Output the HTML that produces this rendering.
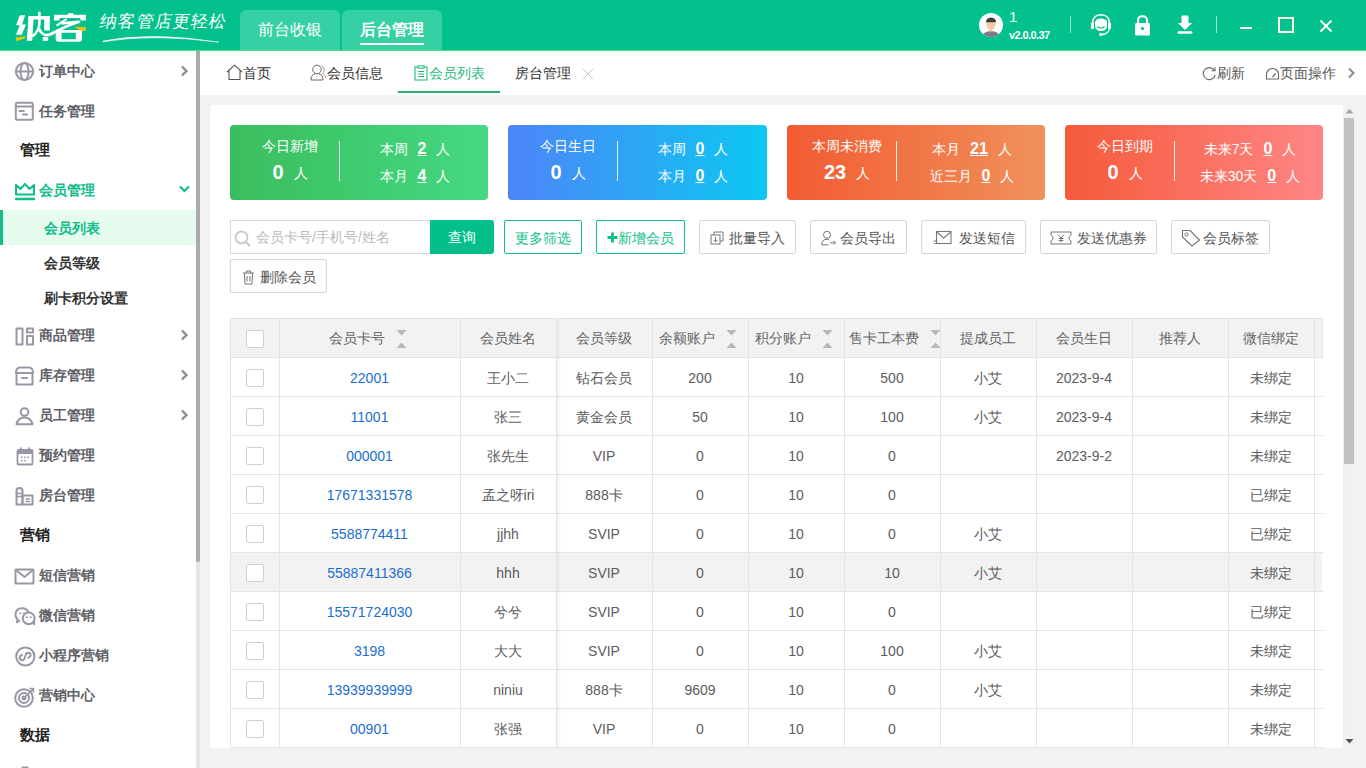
<!DOCTYPE html>
<html><head><meta charset="utf-8"><style>
*{margin:0;padding:0;box-sizing:border-box}
html,body{width:1366px;height:768px;overflow:hidden;background:#f2f2f2;font-family:"Liberation Sans",sans-serif;position:relative}
.a{position:absolute}
.nw{white-space:nowrap}
#hdr{position:absolute;left:0;top:0;width:1366px;height:51px;background:#03c18c;border-bottom:1px solid #52dc7c}
.htab{position:absolute;top:10px;height:40px;background:#35d0a4;border-radius:6px 6px 0 0;color:#fff;font-size:16px;line-height:40px;text-align:center}
#side{position:absolute;left:0;top:0;width:196px;height:768px;overflow:hidden}
.mt{position:absolute;left:39px;height:20px;line-height:20px;font-size:14px;font-weight:bold;color:#606068;white-space:nowrap}
.sec{position:absolute;left:20px;height:20px;line-height:20px;font-size:15px;font-weight:bold;color:#222;white-space:nowrap}
.st{position:absolute;left:44px;height:20px;line-height:20px;font-size:14px;font-weight:bold;color:#333;white-space:nowrap}
.ic{position:absolute;overflow:visible}
.tt{position:absolute;height:20px;line-height:20px;font-size:14px;color:#333;white-space:nowrap}
.card{position:absolute;top:125px;width:258px;height:75px;border-radius:4px;color:#fff}
.card .t{position:absolute;height:20px;line-height:20px;white-space:nowrap}
.btn{position:absolute;top:220px;height:34px;border:1px solid #d6d6d6;border-radius:2px;background:#fff;color:#555;font-size:14px;line-height:32px;white-space:nowrap}
.btn .tx{position:absolute;top:1px}
.gbtn{border-color:#0cbf8b;color:#0cbf8b}
table{border-collapse:collapse;table-layout:fixed}
</style></head><body>
<div id="hdr">
<svg class="a" style="left:0;top:0" width="95" height="48" viewBox="0 0 95 48">
<g fill="#fff">
<polygon points="19.8,15.3 25.1,15.3 22.2,24.6 26,24.6 21.75,34.8 16,34.8 19.75,25.3 16,25.3"/>
<polygon points="28.6,16 33.7,16 32.2,40.8 26.8,40.8"/>
<rect x="28.6" y="16" width="21.2" height="3.5"/>
<rect x="44.2" y="16" width="5.6" height="14.5"/>
<rect x="42.8" y="37" width="5.4" height="3.8"/>
<rect x="68.1" y="13.2" width="5.2" height="2.3"/>
<polygon points="54,14.8 85.9,14.8 85.9,20.4 80.5,20.4 80.5,18.1 59.5,18.1 59.5,20.4 54,20.4"/>
<path fill-rule="evenodd" d="M55.7,30 L82,30 L82,39 Q82,41.7 79,41.7 L58.5,41.7 Q55.7,41.7 55.7,39 Z M61.6,32.8 L75.8,32.8 L75.8,39.2 L61.6,39.2 Z"/>
</g>
<g fill="none" stroke="#fff">
<path d="M39.4,11.8 L39.4,24 Q39,31 32.5,36.5" stroke-width="2.6"/>
<path d="M61.5,23.4 L79,21.8 Q64,27 55,32 Q49,35.5 45,35 Q40,33 38.8,27.5" stroke-width="2.6" stroke-linejoin="round"/>
<path d="M57.3,25.1 L66,19.4" stroke-width="2.2" stroke-linecap="round"/>
</g>
<g fill="#f9c10b">
<polygon points="15.4,37.8 25.5,36.3 24.5,38.5 16.5,41.2"/>
<polygon points="73.7,26.5 85.9,27.2 85.5,31 80.8,30.8"/>
</g>
</svg>
<div class="a nw" style="left:100px;top:9px;font-size:17px;line-height:26px;color:#fff;letter-spacing:1.2px;transform:skewX(-10deg);font-weight:200">纳客管店更轻松</div>
<svg class="a" style="left:100px;top:33px" width="125" height="12" viewBox="0 0 125 12"><path d="M3,8 Q52,-1.5 119,9.2 Q52,0.3 3,8.8 Z" fill="#fff" stroke="#fff" stroke-width="0.5"/></svg>
<div class="htab" style="left:240px;width:100px">前台收银</div>
<div class="htab" style="left:342px;width:100px;font-weight:bold">后台管理<div class="a" style="left:18px;top:33px;width:64px;height:2px;background:#fff"></div></div>
<svg class="a" style="left:979px;top:13px" width="24" height="24" viewBox="0 0 24 24">
<defs><clipPath id="avc"><circle cx="12" cy="12" r="12"/></clipPath></defs>
<circle cx="12" cy="12" r="12" fill="#fff"/>
<g clip-path="url(#avc)">
<path d="M3,24 Q4,18.5 12,18 Q20,18.5 21,24 Z" fill="#787a88"/>
<rect x="10.5" y="14.5" width="3" height="4" fill="#f3c7a3"/>
<ellipse cx="12" cy="11.5" rx="4.6" ry="5.2" fill="#f5c9a5"/>
<path d="M6.8,11 Q6.5,4.5 12,4.5 Q17.5,4.5 17.2,11 L16.5,9 Q12,9.5 7.5,9 Z" fill="#3d3d3d"/>
</g></svg>
<div class="a nw" style="left:1009px;top:8px;font-size:15px;line-height:17px;color:#fff">1</div>
<div class="a nw" style="left:1009px;top:29px;font-size:11px;line-height:13px;color:#fff;font-weight:bold;letter-spacing:-0.6px">v2.0.0.37</div>
<div class="a" style="left:1070px;top:16px;width:1px;height:17px;background:#9ee6cb"></div>
<div class="a" style="left:1216px;top:16px;width:1px;height:17px;background:#9ee6cb"></div>
<svg class="a" style="left:1090px;top:13px" width="22" height="24" viewBox="0 0 22 24">
<path d="M2.5,11 Q2.5,1.8 11,1.8 Q19.5,1.8 19.5,11" fill="none" stroke="#fff" stroke-width="1.6"/>
<rect x="1" y="9.5" width="3" height="6.5" rx="1" fill="#fff"/>
<rect x="18" y="9.5" width="3" height="6.5" rx="1" fill="#fff"/>
<path d="M5,9 Q6,5.5 11,5.5 Q15,5.5 16.5,8 L17,6 L17,12 Q17,18 11,18 Q5,18 5,12 Z" fill="#fff"/>
<path d="M7.5,13.5 Q11,16.5 14.5,13.5" fill="none" stroke="#03c18c" stroke-width="1.1"/>
<path d="M19.5,15 Q19,21 12,21.5" fill="none" stroke="#fff" stroke-width="1.3"/>
<rect x="9" y="20.3" width="4" height="2.4" rx="1.2" fill="#fff"/>
</svg>
<svg class="a" style="left:1134px;top:15px" width="17" height="21" viewBox="0 0 17 21">
<path d="M4,9 L4,5.5 Q4,1.2 8.5,1.2 Q13,1.2 13,5.5 L13,9" fill="none" stroke="#fff" stroke-width="1.9"/>
<rect x="1" y="8" width="15" height="12.5" rx="1.5" fill="#fff"/>
<circle cx="8.5" cy="13.5" r="1.6" fill="#03c18c"/>
</svg>
<svg class="a" style="left:1176px;top:15px" width="18" height="20" viewBox="0 0 18 20">
<path d="M5.5,1.5 Q5.5,0.5 6.5,0.5 L11.5,0.5 Q12.5,0.5 12.5,1.5 L12.5,8 L16.2,8 L9,15 L1.8,8 L5.5,8 Z" fill="#fff"/>
<rect x="0.5" y="16.2" width="15" height="2.6" rx="1.3" fill="#fff" transform="translate(1,0)"/>
</svg>
<div class="a" style="left:1240px;top:27px;width:12px;height:2px;background:#fff"></div>
<div class="a" style="left:1278px;top:17px;width:16px;height:16px;border:2px solid #fdfde3"></div>
<svg class="a" style="left:1319px;top:19px" width="14" height="14" viewBox="0 0 14 14"><path d="M1.5,1.5 L12.5,12.5 M12.5,1.5 L1.5,12.5" stroke="#fff" stroke-width="1.9"/></svg>
</div>
<div id="side" style="background:#fff;top:51px;height:717px"></div>
<svg class="ic" style="left:14px;top:61px" width="21" height="21" viewBox="0 0 21 21" fill="none" stroke="#9797a5" stroke-width="2" stroke-linecap="round" stroke-linejoin="round"><circle cx="10.5" cy="10.5" r="8.6"/><ellipse cx="10.5" cy="10.5" rx="4" ry="8.6"/><path d="M2,10.5 L19,10.5"/></svg>
<div class="mt" style="top:61px">订单中心</div>
<svg class="ic" style="left:179px;top:65px" width="11" height="12" viewBox="0 0 11 12"><path d="M3,1.5 L7.5,6 L3,10.5" fill="none" stroke="#8a8a96" stroke-width="2.3"/></svg>
<svg class="ic" style="left:14px;top:101px" width="21" height="21" viewBox="0 0 21 21" fill="none" stroke="#9797a5" stroke-width="2" stroke-linecap="round" stroke-linejoin="round"><rect x="1.8" y="1.8" width="17" height="17" rx="1.5"/><path d="M2,5.5 L19,5.5"/><path d="M5.5,10 L10,10 M9,13.5 L13,13.5" stroke-width="2"/></svg>
<div class="mt" style="top:101px">任务管理</div>
<div class="sec" style="top:140px">管理</div>
<svg class="ic" style="left:14px;top:182px" width="22" height="20" viewBox="0 0 22 20" fill="none" stroke="#10bc88" stroke-width="2" stroke-linecap="round" stroke-linejoin="round"><path d="M2,12.5 L2,3 L6.5,7 L11,1.8 L15.5,7 L20,3 L20,12.5 Z"/><path d="M2,17 L20,17" stroke-width="2.4"/></svg>
<div class="mt" style="top:180px;color:#10bc88">会员管理</div>
<svg class="ic" style="left:178px;top:184px" width="13" height="10" viewBox="0 0 13 10"><path d="M2,2.5 L6.5,7 L11,2.5" fill="none" stroke="#10bc88" stroke-width="2.2"/></svg>
<div class="a" style="left:0;top:210px;width:196px;height:35px;background:#e5fbee"></div>
<div class="a" style="left:0;top:210px;width:3px;height:35px;background:#10bc88"></div>
<div class="st" style="top:218px;color:#10bc88">会员列表</div>
<div class="st" style="top:253px">会员等级</div>
<div class="st" style="top:288px">刷卡积分设置</div>
<svg class="ic" style="left:14px;top:326px" width="21" height="21" viewBox="0 0 21 21" fill="none" stroke="#9797a5" stroke-width="2" stroke-linecap="round" stroke-linejoin="round"><rect x="2.5" y="2.5" width="6" height="16" /><rect x="13" y="2.5" width="6" height="4"/><rect x="13" y="10" width="6" height="8.5"/></svg>
<div class="mt" style="top:325px">商品管理</div>
<svg class="ic" style="left:179px;top:329px" width="11" height="12" viewBox="0 0 11 12"><path d="M3,1.5 L7.5,6 L3,10.5" fill="none" stroke="#8a8a96" stroke-width="2.3"/></svg>
<svg class="ic" style="left:14px;top:366px" width="21" height="21" viewBox="0 0 21 21" fill="none" stroke="#9797a5" stroke-width="2" stroke-linecap="round" stroke-linejoin="round"><path d="M2,7 Q2,1.5 6,1.5 L15,1.5 Q19,1.5 19,7 Z"/><path d="M2.5,7 L2.5,18.5 L18.5,18.5 L18.5,7"/><path d="M8,12 L13,12" stroke-width="2"/></svg>
<div class="mt" style="top:365px">库存管理</div>
<svg class="ic" style="left:179px;top:369px" width="11" height="12" viewBox="0 0 11 12"><path d="M3,1.5 L7.5,6 L3,10.5" fill="none" stroke="#8a8a96" stroke-width="2.3"/></svg>
<svg class="ic" style="left:14px;top:406px" width="21" height="21" viewBox="0 0 21 21" fill="none" stroke="#9797a5" stroke-width="2" stroke-linecap="round" stroke-linejoin="round"><circle cx="10.5" cy="6" r="3.8"/><path d="M2.5,18.3 Q4,11.5 10.5,11.5 Q17,11.5 18.5,18.3 Z"/></svg>
<div class="mt" style="top:405px">员工管理</div>
<svg class="ic" style="left:179px;top:409px" width="11" height="12" viewBox="0 0 11 12"><path d="M3,1.5 L7.5,6 L3,10.5" fill="none" stroke="#8a8a96" stroke-width="2.3"/></svg>
<svg class="ic" style="left:14px;top:446px" width="21" height="21" viewBox="0 0 21 21"><rect x="3.5" y="4" width="15" height="14.5" rx="1" fill="none" stroke="#9797a5" stroke-width="1.8"/><rect x="3.5" y="4" width="15" height="4" fill="#9797a5"/><rect x="6" y="1.5" width="1.8" height="3" fill="#9797a5"/><rect x="14.2" y="1.5" width="1.8" height="3" fill="#9797a5"/><g fill="#9797a5"><rect x="7" y="10.5" width="1.6" height="1.6"/><rect x="10.2" y="10.5" width="1.6" height="1.6"/><rect x="13.4" y="10.5" width="1.6" height="1.6"/><rect x="7" y="13.8" width="1.6" height="1.6"/><rect x="10.2" y="13.8" width="1.6" height="1.6"/></g></svg>
<div class="mt" style="top:445px">预约管理</div>
<svg class="ic" style="left:14px;top:486px" width="21" height="21" viewBox="0 0 21 21" fill="none" stroke="#9797a5" stroke-width="2" stroke-linecap="round" stroke-linejoin="round"><path d="M2.5,18.5 L2.5,5 Q2.5,2 5.5,2 Q8.5,2 8.5,5 L8.5,18.5 Z"/><path d="M3,7.5 L8,7.5 M3,10.5 L8,10.5" stroke-width="1.4"/><rect x="8.5" y="9.5" width="10" height="9"/><path d="M12,13 L15.5,13 M12,15.5 L15.5,15.5" stroke-width="1.4"/></svg>
<div class="mt" style="top:485px">房台管理</div>
<div class="sec" style="top:525px">营销</div>
<svg class="ic" style="left:14px;top:567px" width="21" height="18" viewBox="0 0 21 18" fill="none" stroke="#9797a5" stroke-width="2" stroke-linecap="round" stroke-linejoin="round"><rect x="1.5" y="2.5" width="18" height="14" rx="0.5"/><path d="M2,3 L10.5,10 L19,3"/></svg>
<div class="mt" style="top:565px">短信营销</div>
<svg class="ic" style="left:14px;top:606px" width="22" height="21" viewBox="0 0 22 21" fill="none" stroke="#9797a5" stroke-width="2" stroke-linecap="round" stroke-linejoin="round"><path d="M5.2,14.8 L2.8,16.2 L3.6,13.2 Q1.5,11.5 1.5,8.8 Q1.5,2.3 8,2.3 Q12.5,2.3 14.2,5.8"/><circle cx="14.7" cy="12.3" r="5.9" fill="#fff"/><path d="M18.5,16.8 L20.3,18.2 L20,15.2" /><path d="M5.8,7.2 L6.8,7.2 M9.6,7.2 L10.6,7.2 M12.2,11.2 L13.2,11.2 M16.2,11.2 L17.2,11.2" stroke-width="1.5"/></svg>
<div class="mt" style="top:605px">微信营销</div>
<svg class="ic" style="left:14px;top:646px" width="22" height="21" viewBox="0 0 22 21" fill="none" stroke="#9797a5" stroke-width="2" stroke-linecap="round" stroke-linejoin="round"><circle cx="11.3" cy="10.5" r="9.1"/><path d="M8,9.3 Q5.6,9.6 5.6,11.9 Q5.8,14.2 8.2,14.2 Q10.5,14 10.8,11.5 L11.6,9.2 Q12,6.8 14.3,6.8 Q16.6,7 16.6,9.2 Q16.4,11.4 14.2,11.6" stroke-width="1.9"/></svg>
<div class="mt" style="top:645px">小程序营销</div>
<svg class="ic" style="left:14px;top:686px" width="22" height="22" viewBox="0 0 22 22" fill="none" stroke="#9797a5" stroke-width="2" stroke-linecap="round" stroke-linejoin="round"><circle cx="10" cy="12" r="8.8"/><circle cx="10" cy="12" r="5"/><circle cx="10" cy="12" r="1.5"/><path d="M10,12 L19,3 M16,2.5 L19.5,2.5 L19.5,6" stroke-width="1.6"/></svg>
<div class="mt" style="top:685px">营销中心</div>
<div class="sec" style="top:725px">数据</div>
<svg class="ic" style="left:14px;top:765px" width="21" height="10" viewBox="0 0 21 10" fill="none" stroke="#9797a5" stroke-width="2" stroke-linecap="round" stroke-linejoin="round"><path d="M8.5,2.5 L13.5,2.5"/></svg>
<div class="a" style="left:196px;top:51px;width:4px;height:717px;background:#e6e6e6"></div>
<div class="a" style="left:196px;top:51px;width:4px;height:511px;background:#ababab;border-radius:0 0 2px 2px"></div>
<div class="a" style="left:200px;top:51px;width:1166px;height:44px;background:#fff"></div>
<svg class="ic" style="left:226px;top:64px" width="17" height="17" viewBox="0 0 17 17"><path d="M1,8 L8.5,1.2 L16,8 M3,6.5 L3,15.5 L14,15.5 L14,6.5" fill="none" stroke="#555" stroke-width="1.1"/></svg>
<div class="tt" style="left:243px;top:63px">首页</div>
<svg class="ic" style="left:310px;top:64px" width="17" height="17" viewBox="0 0 17 17"><circle cx="7" cy="5.5" r="4.3" fill="none" stroke="#555" stroke-width="0.9"/><path d="M1,16 Q1,10.5 5,10 M9,10 Q13,10.5 13,16 L1,16" fill="none" stroke="#555" stroke-width="0.9"/><path d="M11.5,1.8 Q14.5,3 14.3,6.5 Q14,8.5 12.5,9.5 Q15.5,10.5 16,14" fill="none" stroke="#888" stroke-width="0.8"/></svg>
<div class="tt" style="left:327px;top:63px">会员信息</div>
<svg class="ic" style="left:413px;top:65px" width="16" height="16" viewBox="0 0 16 16"><rect x="2" y="2" width="12" height="13" fill="none" stroke="#1fba7a" stroke-width="1.1"/><rect x="5" y="0.8" width="6" height="2.4" fill="#fff" stroke="#1fba7a" stroke-width="1"/><path d="M5,6.5 L11,6.5 M5,9 L11,9 M5,11.5 L11,11.5" stroke="#1fba7a" stroke-width="1"/></svg>
<div class="tt" style="left:429px;top:63px;color:#1fba7a">会员列表</div>
<div class="a" style="left:398px;top:91px;width:102px;height:2px;background:#22b46e"></div>
<div class="tt" style="left:515px;top:63px">房台管理</div>
<svg class="ic" style="left:582px;top:68px" width="12" height="12" viewBox="0 0 12 12"><path d="M1,1 L11,11 M11,1 L1,11" stroke="#c8c8c8" stroke-width="1"/></svg>
<svg class="ic" style="left:1202px;top:66px" width="15" height="15" viewBox="0 0 15 15"><path d="M12.5,4.5 A6,6 0 1 0 13.2,9" fill="none" stroke="#666" stroke-width="1.1"/><path d="M9.5,4.8 L13,4.8 L13,1.2" fill="none" stroke="#666" stroke-width="1.1"/></svg>
<div class="tt" style="left:1217px;top:63px;color:#555">刷新</div>
<svg class="ic" style="left:1265px;top:66px" width="15" height="15" viewBox="0 0 15 15"><path d="M1.5,13 L1.5,8.5 A6,6 0 0 1 13.5,8.5 L13.5,13 Z" fill="none" stroke="#666" stroke-width="1.1"/><path d="M7.5,11 L10.5,7.5" stroke="#666" stroke-width="1.2"/></svg>
<div class="tt" style="left:1280px;top:63px;color:#555">页面操作</div>
<svg class="ic" style="left:1346px;top:67px" width="11" height="12" viewBox="0 0 11 12"><path d="M3,1.5 L7.5,6 L3,10.5" fill="none" stroke="#8a8a96" stroke-width="2"/></svg>
<div class="a" style="left:210px;top:105px;width:1146px;height:643px;background:#fff;border-radius:3px 0 0 3px"></div>
<div class="card" style="left:230px;width:258px;background:linear-gradient(90deg,#3bbd5e,#44d982)">
<div class="t" style="left:0;width:120px;text-align:center;top:11px;font-size:14px">今日新增</div>
<div class="t" style="left:0;width:120px;text-align:center;top:37px;font-size:14px"><b style="font-size:20px;vertical-align:-1px">0</b><span style="margin-left:10px">人</span></div>
<div class="a" style="left:109px;top:16px;width:1px;height:40px;background:rgba(255,255,255,0.9)"></div>
<div class="t" style="left:110px;width:150px;text-align:center;top:14px;font-size:14px">本周<u style="font-weight:bold;font-size:16px;margin:0 10px">2</u>人</div>
<div class="t" style="left:110px;width:150px;text-align:center;top:41px;font-size:14px">本月<u style="font-weight:bold;font-size:16px;margin:0 10px">4</u>人</div>
</div>
<div class="card" style="left:508px;width:259px;background:linear-gradient(90deg,#4d85f8,#0cc8f1)">
<div class="t" style="left:0;width:120px;text-align:center;top:11px;font-size:14px">今日生日</div>
<div class="t" style="left:0;width:120px;text-align:center;top:37px;font-size:14px"><b style="font-size:20px;vertical-align:-1px">0</b><span style="margin-left:10px">人</span></div>
<div class="a" style="left:109px;top:16px;width:1px;height:40px;background:rgba(255,255,255,0.9)"></div>
<div class="t" style="left:110px;width:150px;text-align:center;top:14px;font-size:14px">本周<u style="font-weight:bold;font-size:16px;margin:0 10px">0</u>人</div>
<div class="t" style="left:110px;width:150px;text-align:center;top:41px;font-size:14px">本月<u style="font-weight:bold;font-size:16px;margin:0 10px">0</u>人</div>
</div>
<div class="card" style="left:787px;width:258px;background:linear-gradient(90deg,#f25b33,#f0915b)">
<div class="t" style="left:0;width:120px;text-align:center;top:11px;font-size:14px">本周未消费</div>
<div class="t" style="left:0;width:120px;text-align:center;top:37px;font-size:14px"><b style="font-size:20px;vertical-align:-1px">23</b><span style="margin-left:10px">人</span></div>
<div class="a" style="left:109px;top:16px;width:1px;height:40px;background:rgba(255,255,255,0.9)"></div>
<div class="t" style="left:110px;width:150px;text-align:center;top:14px;font-size:14px">本月<u style="font-weight:bold;font-size:16px;margin:0 10px">21</u>人</div>
<div class="t" style="left:110px;width:150px;text-align:center;top:41px;font-size:14px">近三月<u style="font-weight:bold;font-size:16px;margin:0 10px">0</u>人</div>
</div>
<div class="card" style="left:1065px;width:258px;background:linear-gradient(90deg,#f55a3a,#ff8686)">
<div class="t" style="left:0;width:120px;text-align:center;top:11px;font-size:14px">今日到期</div>
<div class="t" style="left:0;width:120px;text-align:center;top:37px;font-size:14px"><b style="font-size:20px;vertical-align:-1px">0</b><span style="margin-left:10px">人</span></div>
<div class="a" style="left:109px;top:16px;width:1px;height:40px;background:rgba(255,255,255,0.9)"></div>
<div class="t" style="left:110px;width:150px;text-align:center;top:14px;font-size:14px">未来7天<u style="font-weight:bold;font-size:16px;margin:0 10px">0</u>人</div>
<div class="t" style="left:110px;width:150px;text-align:center;top:41px;font-size:14px">未来30天<u style="font-weight:bold;font-size:16px;margin:0 10px">0</u>人</div>
</div>
<div class="a" style="left:230px;top:220px;width:201px;height:34px;border:1px solid #d9d9d9;border-right:none;background:#fff"></div>
<svg class="ic" style="left:234px;top:230px" width="18" height="18" viewBox="0 0 18 18"><circle cx="7.5" cy="7.5" r="6" fill="none" stroke="#c8c8c8" stroke-width="1.8"/><path d="M12,12 L16,16" stroke="#c8c8c8" stroke-width="2"/></svg>
<div class="tt" style="left:256px;top:227px;color:#bbb;font-size:14px">会员卡号/手机号/姓名</div>
<div class="a" style="left:430px;top:220px;width:64px;height:34px;background:#05bf8b;border-radius:0 3px 3px 0;color:#fff;font-size:14px;line-height:34px;text-align:center">查询</div>
<div class="btn gbtn" style="left:504px;width:78px;top:220px"><span class="tx" style="left:10px">更多筛选</span></div>
<div class="btn gbtn" style="left:596px;width:89px;top:220px"><svg class="ic" style="left:10px;top:11px" width="11" height="11" viewBox="0 0 11 11"><path d="M5.5,0.5 L5.5,10.5 M0.5,5.5 L10.5,5.5" stroke="#0cbf8b" stroke-width="2.8"/></svg><span class="tx" style="left:21px">新增会员</span></div>
<div class="btn " style="left:699px;width:97px;top:220px"><svg class="ic" style="left:10px;top:10px" width="14" height="14" viewBox="0 0 14 14"><rect x="1" y="4" width="9" height="9" fill="none" stroke="#777" stroke-width="1"/><path d="M4,4 L4,1 L13,1 L13,10 L10,10" fill="none" stroke="#777" stroke-width="1"/><path d="M5.5,6 L5.5,11 M3.5,9 L5.5,11 L7.5,9" fill="none" stroke="#777" stroke-width="1"/></svg><span class="tx" style="left:29px">批量导入</span></div>
<div class="btn " style="left:810px;width:97px;top:220px"><svg class="ic" style="left:9px;top:9px" width="17" height="16" viewBox="0 0 17 16"><circle cx="7" cy="4.8" r="3.5" fill="none" stroke="#777" stroke-width="1"/><path d="M9.5,10.2 Q8.5,9.3 7,9.3 Q1.8,9.3 1.8,14.8 L8.5,14.8 M10,12.8 L15.5,12.8 M13.5,10.8 L15.5,12.8 L13.5,14.8" fill="none" stroke="#777" stroke-width="1"/></svg><span class="tx" style="left:29px">会员导出</span></div>
<div class="btn " style="left:921px;width:105px;top:220px"><svg class="ic" style="left:11px;top:9px" width="19" height="16" viewBox="0 0 19 16"><rect x="3.5" y="1.5" width="14.5" height="12" fill="none" stroke="#777" stroke-width="1.1"/><path d="M3.8,2 L10.7,8 L17.7,2" fill="none" stroke="#777" stroke-width="1.1"/><path d="M0.5,11 L3,11 M1.5,13.5 L3,13.5" stroke="#777" stroke-width="1"/></svg><span class="tx" style="left:37px">发送短信</span></div>
<div class="btn " style="left:1040px;width:117px;top:220px"><svg class="ic" style="left:9px;top:10px" width="22" height="14" viewBox="0 0 22 14"><path d="M1,1 L21,1 L21,4 Q19,5 19,7 Q19,9 21,10 L21,13 L1,13 L1,10 Q3,9 3,7 Q3,5 1,4 Z" fill="none" stroke="#777" stroke-width="1"/><path d="M8,3.5 L11,7 L14,3.5 M11,7 L11,11.5 M8.5,7.5 L13.5,7.5 M8.5,9.5 L13.5,9.5" fill="none" stroke="#777" stroke-width="1"/></svg><span class="tx" style="left:36px">发送优惠券</span></div>
<div class="btn " style="left:1171px;width:99px;top:220px"><svg class="ic" style="left:9px;top:8px" width="20" height="18" viewBox="0 0 20 18"><path d="M1.5,1.5 L9,1.5 L18.5,11 L11,17 L1.5,8 Z" fill="none" stroke="#777" stroke-width="1.1" stroke-linejoin="round"/><circle cx="5.5" cy="5.5" r="1.6" fill="none" stroke="#777" stroke-width="1"/></svg><span class="tx" style="left:31px">会员标签</span></div>
<div class="btn " style="left:230px;width:97px;top:259px"><svg class="ic" style="left:11px;top:10px" width="13" height="15" viewBox="0 0 13 15"><path d="M1,3 L12,3 M4.5,3 L4.5,1 L8.5,1 L8.5,3 M2.5,3 L3,14 L10,14 L10.5,3 M5,6 L5,11.5 M8,6 L8,11.5" fill="none" stroke="#777" stroke-width="1"/></svg><span class="tx" style="left:29px">删除会员</span></div>
<div class="a" style="left:230px;top:318px;width:1092px;height:40px;background:#f2f2f2"></div>
<div class="a" style="left:230px;top:552px;width:1092px;height:39px;background:#f2f2f2"></div>
<div class="a" style="left:230px;top:318px;width:1093px;height:1px;background:#e4e4e4"></div>
<div class="a" style="left:230px;top:357px;width:1093px;height:1px;background:#e4e4e4"></div>
<div class="a" style="left:230px;top:396px;width:1093px;height:1px;background:#e4e4e4"></div>
<div class="a" style="left:230px;top:435px;width:1093px;height:1px;background:#e4e4e4"></div>
<div class="a" style="left:230px;top:474px;width:1093px;height:1px;background:#e4e4e4"></div>
<div class="a" style="left:230px;top:513px;width:1093px;height:1px;background:#e4e4e4"></div>
<div class="a" style="left:230px;top:552px;width:1093px;height:1px;background:#e4e4e4"></div>
<div class="a" style="left:230px;top:591px;width:1093px;height:1px;background:#e4e4e4"></div>
<div class="a" style="left:230px;top:630px;width:1093px;height:1px;background:#e4e4e4"></div>
<div class="a" style="left:230px;top:669px;width:1093px;height:1px;background:#e4e4e4"></div>
<div class="a" style="left:230px;top:708px;width:1093px;height:1px;background:#e4e4e4"></div>
<div class="a" style="left:230px;top:747px;width:1093px;height:1px;background:#e4e4e4"></div>
<div class="a" style="left:230px;top:318px;width:1px;height:430px;background:#e4e4e4"></div>
<div class="a" style="left:279px;top:318px;width:1px;height:430px;background:#e4e4e4"></div>
<div class="a" style="left:460px;top:318px;width:1px;height:430px;background:#e4e4e4"></div>
<div class="a" style="left:556px;top:318px;width:1px;height:430px;background:#e4e4e4"></div>
<div class="a" style="left:652px;top:318px;width:1px;height:430px;background:#e4e4e4"></div>
<div class="a" style="left:748px;top:318px;width:1px;height:430px;background:#e4e4e4"></div>
<div class="a" style="left:844px;top:318px;width:1px;height:430px;background:#e4e4e4"></div>
<div class="a" style="left:940px;top:318px;width:1px;height:430px;background:#e4e4e4"></div>
<div class="a" style="left:1036px;top:318px;width:1px;height:430px;background:#e4e4e4"></div>
<div class="a" style="left:1132px;top:318px;width:1px;height:430px;background:#e4e4e4"></div>
<div class="a" style="left:1228px;top:318px;width:1px;height:430px;background:#e4e4e4"></div>
<div class="a" style="left:1314px;top:318px;width:1px;height:430px;background:#e4e4e4"></div>
<div class="a" style="left:1322px;top:318px;width:1px;height:40px;background:#e4e4e4"></div>
<div class="a" style="left:557px;top:319px;width:5px;height:428px;background:linear-gradient(90deg,rgba(0,0,0,0.045),rgba(0,0,0,0))"></div>
<div class="a" style="left:246px;top:330px;width:18px;height:18px;border:1px solid #cfcfcf;border-radius:2px;background:#fff"></div>
<div class="a" style="left:246px;top:369px;width:18px;height:18px;border:1px solid #cfcfcf;border-radius:2px;background:#fff"></div>
<div class="a" style="left:246px;top:408px;width:18px;height:18px;border:1px solid #cfcfcf;border-radius:2px;background:#fff"></div>
<div class="a" style="left:246px;top:447px;width:18px;height:18px;border:1px solid #cfcfcf;border-radius:2px;background:#fff"></div>
<div class="a" style="left:246px;top:486px;width:18px;height:18px;border:1px solid #cfcfcf;border-radius:2px;background:#fff"></div>
<div class="a" style="left:246px;top:525px;width:18px;height:18px;border:1px solid #cfcfcf;border-radius:2px;background:#fff"></div>
<div class="a" style="left:246px;top:564px;width:18px;height:18px;border:1px solid #cfcfcf;border-radius:2px;background:#fff"></div>
<div class="a" style="left:246px;top:603px;width:18px;height:18px;border:1px solid #cfcfcf;border-radius:2px;background:#fff"></div>
<div class="a" style="left:246px;top:642px;width:18px;height:18px;border:1px solid #cfcfcf;border-radius:2px;background:#fff"></div>
<div class="a" style="left:246px;top:681px;width:18px;height:18px;border:1px solid #cfcfcf;border-radius:2px;background:#fff"></div>
<div class="a" style="left:246px;top:720px;width:18px;height:18px;border:1px solid #cfcfcf;border-radius:2px;background:#fff"></div>
<div class="tt" style="left:329px;top:328px;color:#666">会员卡号</div>
<svg class="ic" style="left:396px;top:330px" width="11" height="19" viewBox="0 0 11 19"><path d="M0.5,0 L10.5,0 L5.5,5.5 Z M0.5,18 L10.5,18 L5.5,12.5 Z" fill="#b8b8b8"/></svg>
<div class="tt" style="left:460px;width:96px;top:328px;text-align:center;color:#666">会员姓名</div>
<div class="tt" style="left:556px;width:96px;top:328px;text-align:center;color:#666">会员等级</div>
<div class="tt" style="left:659px;top:328px;color:#666">余额账户</div>
<svg class="ic" style="left:726px;top:330px" width="11" height="19" viewBox="0 0 11 19"><path d="M0.5,0 L10.5,0 L5.5,5.5 Z M0.5,18 L10.5,18 L5.5,12.5 Z" fill="#b8b8b8"/></svg>
<div class="tt" style="left:755px;top:328px;color:#666">积分账户</div>
<svg class="ic" style="left:822px;top:330px" width="11" height="19" viewBox="0 0 11 19"><path d="M0.5,0 L10.5,0 L5.5,5.5 Z M0.5,18 L10.5,18 L5.5,12.5 Z" fill="#b8b8b8"/></svg>
<div class="tt" style="left:849px;top:328px;color:#666">售卡工本费</div>
<svg class="ic" style="left:930px;top:330px" width="11" height="19" viewBox="0 0 11 19"><path d="M0.5,0 L10.5,0 L5.5,5.5 Z M0.5,18 L10.5,18 L5.5,12.5 Z" fill="#b8b8b8"/></svg>
<div class="tt" style="left:940px;width:96px;top:328px;text-align:center;color:#666">提成员工</div>
<div class="tt" style="left:1036px;width:96px;top:328px;text-align:center;color:#666">会员生日</div>
<div class="tt" style="left:1132px;width:96px;top:328px;text-align:center;color:#666">推荐人</div>
<div class="tt" style="left:1228px;width:86px;top:328px;text-align:center;color:#666">微信绑定</div>
<div class="tt" style="left:279px;width:181px;top:368px;text-align:center;color:#1a6ed0">22001</div>
<div class="tt" style="left:460px;width:96px;top:368px;text-align:center;color:#5c5c5c">王小二</div>
<div class="tt" style="left:556px;width:96px;top:368px;text-align:center;color:#5c5c5c">钻石会员</div>
<div class="tt" style="left:652px;width:96px;top:368px;text-align:center;color:#5c5c5c">200</div>
<div class="tt" style="left:748px;width:96px;top:368px;text-align:center;color:#5c5c5c">10</div>
<div class="tt" style="left:844px;width:96px;top:368px;text-align:center;color:#5c5c5c">500</div>
<div class="tt" style="left:940px;width:96px;top:368px;text-align:center;color:#5c5c5c">小艾</div>
<div class="tt" style="left:1036px;width:96px;top:368px;text-align:center;color:#5c5c5c">2023-9-4</div>
<div class="tt" style="left:1228px;width:86px;top:368px;text-align:center;color:#5c5c5c">未绑定</div>
<div class="tt" style="left:279px;width:181px;top:407px;text-align:center;color:#1a6ed0">11001</div>
<div class="tt" style="left:460px;width:96px;top:407px;text-align:center;color:#5c5c5c">张三</div>
<div class="tt" style="left:556px;width:96px;top:407px;text-align:center;color:#5c5c5c">黄金会员</div>
<div class="tt" style="left:652px;width:96px;top:407px;text-align:center;color:#5c5c5c">50</div>
<div class="tt" style="left:748px;width:96px;top:407px;text-align:center;color:#5c5c5c">10</div>
<div class="tt" style="left:844px;width:96px;top:407px;text-align:center;color:#5c5c5c">100</div>
<div class="tt" style="left:940px;width:96px;top:407px;text-align:center;color:#5c5c5c">小艾</div>
<div class="tt" style="left:1036px;width:96px;top:407px;text-align:center;color:#5c5c5c">2023-9-4</div>
<div class="tt" style="left:1228px;width:86px;top:407px;text-align:center;color:#5c5c5c">未绑定</div>
<div class="tt" style="left:279px;width:181px;top:446px;text-align:center;color:#1a6ed0">000001</div>
<div class="tt" style="left:460px;width:96px;top:446px;text-align:center;color:#5c5c5c">张先生</div>
<div class="tt" style="left:556px;width:96px;top:446px;text-align:center;color:#5c5c5c">VIP</div>
<div class="tt" style="left:652px;width:96px;top:446px;text-align:center;color:#5c5c5c">0</div>
<div class="tt" style="left:748px;width:96px;top:446px;text-align:center;color:#5c5c5c">10</div>
<div class="tt" style="left:844px;width:96px;top:446px;text-align:center;color:#5c5c5c">0</div>
<div class="tt" style="left:1036px;width:96px;top:446px;text-align:center;color:#5c5c5c">2023-9-2</div>
<div class="tt" style="left:1228px;width:86px;top:446px;text-align:center;color:#5c5c5c">未绑定</div>
<div class="tt" style="left:279px;width:181px;top:485px;text-align:center;color:#1a6ed0">17671331578</div>
<div class="tt" style="left:460px;width:96px;top:485px;text-align:center;color:#5c5c5c">孟之呀iri</div>
<div class="tt" style="left:556px;width:96px;top:485px;text-align:center;color:#5c5c5c">888卡</div>
<div class="tt" style="left:652px;width:96px;top:485px;text-align:center;color:#5c5c5c">0</div>
<div class="tt" style="left:748px;width:96px;top:485px;text-align:center;color:#5c5c5c">10</div>
<div class="tt" style="left:844px;width:96px;top:485px;text-align:center;color:#5c5c5c">0</div>
<div class="tt" style="left:1228px;width:86px;top:485px;text-align:center;color:#5c5c5c">已绑定</div>
<div class="tt" style="left:279px;width:181px;top:524px;text-align:center;color:#1a6ed0">5588774411</div>
<div class="tt" style="left:460px;width:96px;top:524px;text-align:center;color:#5c5c5c">jjhh</div>
<div class="tt" style="left:556px;width:96px;top:524px;text-align:center;color:#5c5c5c">SVIP</div>
<div class="tt" style="left:652px;width:96px;top:524px;text-align:center;color:#5c5c5c">0</div>
<div class="tt" style="left:748px;width:96px;top:524px;text-align:center;color:#5c5c5c">10</div>
<div class="tt" style="left:844px;width:96px;top:524px;text-align:center;color:#5c5c5c">0</div>
<div class="tt" style="left:940px;width:96px;top:524px;text-align:center;color:#5c5c5c">小艾</div>
<div class="tt" style="left:1228px;width:86px;top:524px;text-align:center;color:#5c5c5c">已绑定</div>
<div class="tt" style="left:279px;width:181px;top:563px;text-align:center;color:#1a6ed0">55887411366</div>
<div class="tt" style="left:460px;width:96px;top:563px;text-align:center;color:#5c5c5c">hhh</div>
<div class="tt" style="left:556px;width:96px;top:563px;text-align:center;color:#5c5c5c">SVIP</div>
<div class="tt" style="left:652px;width:96px;top:563px;text-align:center;color:#5c5c5c">0</div>
<div class="tt" style="left:748px;width:96px;top:563px;text-align:center;color:#5c5c5c">10</div>
<div class="tt" style="left:844px;width:96px;top:563px;text-align:center;color:#5c5c5c">10</div>
<div class="tt" style="left:940px;width:96px;top:563px;text-align:center;color:#5c5c5c">小艾</div>
<div class="tt" style="left:1228px;width:86px;top:563px;text-align:center;color:#5c5c5c">未绑定</div>
<div class="tt" style="left:279px;width:181px;top:602px;text-align:center;color:#1a6ed0">15571724030</div>
<div class="tt" style="left:460px;width:96px;top:602px;text-align:center;color:#5c5c5c">兮兮</div>
<div class="tt" style="left:556px;width:96px;top:602px;text-align:center;color:#5c5c5c">SVIP</div>
<div class="tt" style="left:652px;width:96px;top:602px;text-align:center;color:#5c5c5c">0</div>
<div class="tt" style="left:748px;width:96px;top:602px;text-align:center;color:#5c5c5c">10</div>
<div class="tt" style="left:844px;width:96px;top:602px;text-align:center;color:#5c5c5c">0</div>
<div class="tt" style="left:1228px;width:86px;top:602px;text-align:center;color:#5c5c5c">已绑定</div>
<div class="tt" style="left:279px;width:181px;top:641px;text-align:center;color:#1a6ed0">3198</div>
<div class="tt" style="left:460px;width:96px;top:641px;text-align:center;color:#5c5c5c">大大</div>
<div class="tt" style="left:556px;width:96px;top:641px;text-align:center;color:#5c5c5c">SVIP</div>
<div class="tt" style="left:652px;width:96px;top:641px;text-align:center;color:#5c5c5c">0</div>
<div class="tt" style="left:748px;width:96px;top:641px;text-align:center;color:#5c5c5c">10</div>
<div class="tt" style="left:844px;width:96px;top:641px;text-align:center;color:#5c5c5c">100</div>
<div class="tt" style="left:940px;width:96px;top:641px;text-align:center;color:#5c5c5c">小艾</div>
<div class="tt" style="left:1228px;width:86px;top:641px;text-align:center;color:#5c5c5c">未绑定</div>
<div class="tt" style="left:279px;width:181px;top:680px;text-align:center;color:#1a6ed0">13939939999</div>
<div class="tt" style="left:460px;width:96px;top:680px;text-align:center;color:#5c5c5c">niniu</div>
<div class="tt" style="left:556px;width:96px;top:680px;text-align:center;color:#5c5c5c">888卡</div>
<div class="tt" style="left:652px;width:96px;top:680px;text-align:center;color:#5c5c5c">9609</div>
<div class="tt" style="left:748px;width:96px;top:680px;text-align:center;color:#5c5c5c">10</div>
<div class="tt" style="left:844px;width:96px;top:680px;text-align:center;color:#5c5c5c">0</div>
<div class="tt" style="left:940px;width:96px;top:680px;text-align:center;color:#5c5c5c">小艾</div>
<div class="tt" style="left:1228px;width:86px;top:680px;text-align:center;color:#5c5c5c">未绑定</div>
<div class="tt" style="left:279px;width:181px;top:719px;text-align:center;color:#1a6ed0">00901</div>
<div class="tt" style="left:460px;width:96px;top:719px;text-align:center;color:#5c5c5c">张强</div>
<div class="tt" style="left:556px;width:96px;top:719px;text-align:center;color:#5c5c5c">VIP</div>
<div class="tt" style="left:652px;width:96px;top:719px;text-align:center;color:#5c5c5c">0</div>
<div class="tt" style="left:748px;width:96px;top:719px;text-align:center;color:#5c5c5c">10</div>
<div class="tt" style="left:844px;width:96px;top:719px;text-align:center;color:#5c5c5c">0</div>
<div class="tt" style="left:1228px;width:86px;top:719px;text-align:center;color:#5c5c5c">未绑定</div>
<div class="a" style="left:1343px;top:105px;width:13px;height:643px;background:#f1f1f1"></div>
<div class="a" style="left:1344px;top:118px;width:10px;height:346px;background:#c1c1c1"></div>
<svg class="ic" style="left:1343px;top:105px" width="13" height="13" viewBox="0 0 13 13"><path d="M2.5,8.5 L10.5,8.5 L6.5,4 Z" fill="#a3a3a3"/></svg>
<svg class="ic" style="left:1343px;top:735px" width="13" height="13" viewBox="0 0 13 13"><path d="M2.5,4 L10.5,4 L6.5,8.5 Z" fill="#505050"/></svg>
</body></html>
